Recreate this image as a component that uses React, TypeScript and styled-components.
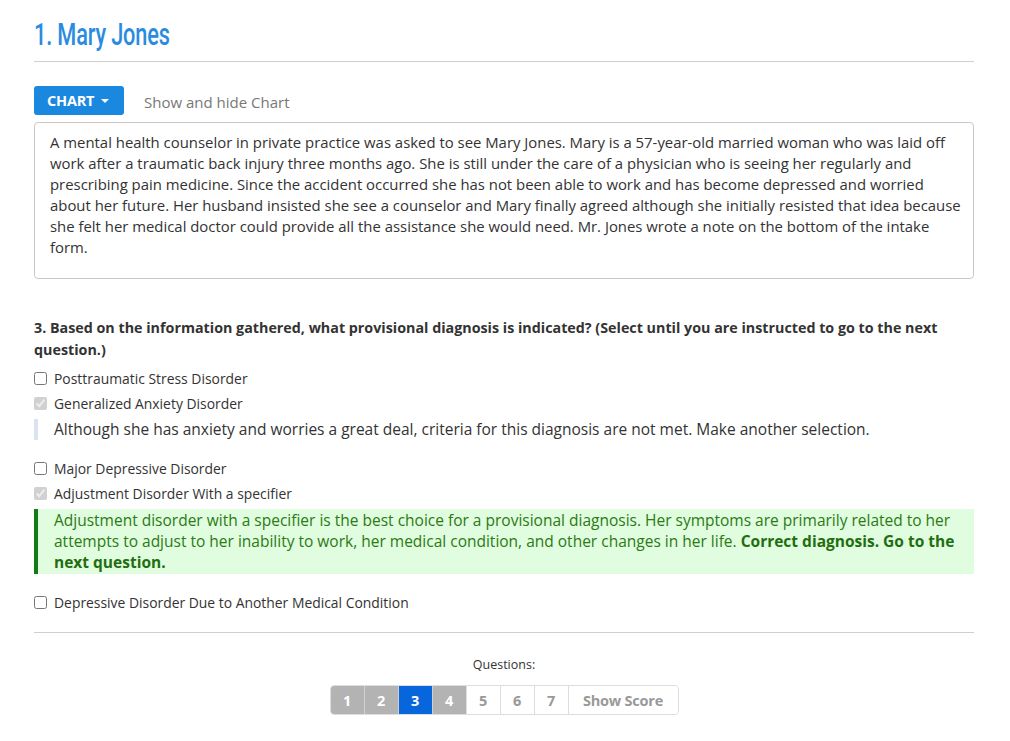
import React from "react";
import styled, { createGlobalStyle } from "styled-components";

const Global = createGlobalStyle`
  html, body { margin: 0; padding: 0; background: #fff; }
  body { font-family: "Open Sans", "Noto Sans", sans-serif; color: #333; }
  * { box-sizing: border-box; }
`;

const Page = styled.div`
  width: 940px;
  margin: 0 0 0 34px;
  padding-top: 18px;
`;

const Title = styled.h1`
  margin: 0;
  height: 34px;
  font-family: "Roboto", "Liberation Sans", sans-serif;
  font-weight: 500;
  font-size: 31px;
  line-height: 34px;
  color: #2a8be0;
  letter-spacing: -0.2px;
  span {
    display: inline-block;
    transform: scaleX(0.7);
    transform-origin: left center;
  }
`;

const Rule = styled.hr<{ $mt: number }>`
  border: 0;
  border-top: 1px solid #cfcfcf;
  margin: ${(p) => p.$mt}px 0 0 0;
`;

const Toolbar = styled.div`
  display: flex;
  align-items: center;
  gap: 20px;
  margin-top: 24px;
`;

const ChartButton = styled.button`
  display: inline-flex;
  align-items: center;
  gap: 7px;
  height: 29px;
  width: 90px;
  padding: 0 0 0 13px;
  border: 0;
  border-radius: 3px;
  background: #1b88e0;
  color: #fff;
  font-family: "Open Sans", sans-serif;
  font-weight: 700;
  font-size: 14.5px;
  letter-spacing: -0.2px;
`;

const Caret = styled.span`
  width: 0;
  height: 0;
  border-left: 4px solid transparent;
  border-right: 4px solid transparent;
  border-top: 4px solid #fff;
  margin-top: 1px;
`;

const Hint = styled.span`
  color: #777;
  font-size: 15px;
  padding-top: 3px;
`;

const CaseBox = styled.div`
  margin-top: 7px;
  border: 1px solid #c8c8c8;
  border-radius: 4px;
  padding: 9px 9px 20px 15px;
  font-size: 14.9px;
  line-height: 21px;
  color: #333;
`;

const Question = styled.div`
  margin-top: 38px;
  font-weight: 700;
  font-size: 14.3px;
  line-height: 22px;
  color: #333;
`;

const Options = styled.div`
  margin-top: 5px;
  display: flex;
  flex-direction: column;
`;

const OptionRow = styled.label`
  display: flex;
  align-items: center;
  gap: 7px;
  height: 25px;
  font-size: 13.9px;
  color: #333;
`;

const Box = styled.input`
  margin: 0;
  width: 13px;
  height: 13px;
`;

const Feedback = styled.div<{ $ok?: boolean }>`
  border-left: 4px solid ${(p) => (p.$ok ? "#137b13" : "#dbe3ee")};
  background: ${(p) => (p.$ok ? "#e0fde0" : "transparent")};
  color: ${(p) => (p.$ok ? "#2b7a12" : "#333")};
  padding: ${(p) => (p.$ok ? "1px 10px 1px 16px" : "0 10px 0 16px")};
  font-size: 15.5px;
  line-height: 21px;
  margin: 3px 0 0 0;
  b { font-weight: 700; color: #1f6e0f; }
`;

const Spacer = styled.div<{ $h: number }>`
  height: ${(p) => p.$h}px;
`;

const Footer = styled.div`
  display: flex;
  flex-direction: column;
  align-items: center;
  margin-top: 23px;
`;

const FooterLabel = styled.div`
  font-size: 12.5px;
  color: #333;
`;

const Pager = styled.div`
  display: flex;
  margin-top: 12px;
  border: 1px solid #ddd;
  border-radius: 4px;
  overflow: hidden;
`;

const PageBtn = styled.div<{ $state: "done" | "active" | "todo"; $w: number }>`
  display: flex;
  align-items: center;
  justify-content: center;
  width: ${(p) => p.$w}px;
  height: 28px;
  font-weight: 700;
  font-size: 14.5px;
  letter-spacing: -0.2px;
  border-left: 1px solid ${(p) => (p.$state === "todo" ? "#ddd" : "#d0d0d0")};
  &:first-child { border-left: 0; }
  background: ${(p) =>
    p.$state === "active" ? "#0866dc" : p.$state === "done" ? "#b3b3b3" : "#fff"};
  color: ${(p) => (p.$state === "todo" ? "#999" : "#fff")};
`;

export default function App() {
  const pages: { label: string; state: "done" | "active" | "todo"; w: number }[] = [
    { label: "1", state: "done", w: 33 },
    { label: "2", state: "done", w: 34 },
    { label: "3", state: "active", w: 34 },
    { label: "4", state: "done", w: 34 },
    { label: "5", state: "todo", w: 34 },
    { label: "6", state: "todo", w: 34 },
    { label: "7", state: "todo", w: 34 },
    { label: "Show Score", state: "todo", w: 110 },
  ];
  return (
    <>
      <Global />
      <Page>
        <Title>
          <span>1. Mary Jones</span>
        </Title>
        <Rule $mt={9} />
        <Toolbar>
          <ChartButton>
            CHART <Caret />
          </ChartButton>
          <Hint>Show and hide Chart</Hint>
        </Toolbar>
        <CaseBox>
          A mental health counselor in private practice was asked to see Mary Jones. Mary is a
          57-year-old married woman who was laid off work after a traumatic back injury three months
          ago. She is still under the care of a physician who is seeing her regularly and prescribing
          pain medicine. Since the accident occurred she has not been able to work and has become
          depressed and worried about her future. Her husband insisted she see a counselor and Mary
          finally agreed although she initially resisted that idea because she felt her medical
          doctor could provide all the assistance she would need. Mr. Jones wrote a note on the
          bottom of the intake form.
        </CaseBox>
        <Question>
          3. Based on the information gathered, what provisional diagnosis is indicated? (Select
          until you are instructed to go to the next question.)
        </Question>
        <Options>
          <OptionRow>
            <Box type="checkbox" readOnly />
            Posttraumatic Stress Disorder
          </OptionRow>
          <OptionRow>
            <Box type="checkbox" checked disabled readOnly />
            Generalized Anxiety Disorder
          </OptionRow>
          <Feedback>
            Although she has anxiety and worries a great deal, criteria for this diagnosis are not
            met. Make another selection.
          </Feedback>
          <Spacer $h={16} />
          <OptionRow>
            <Box type="checkbox" readOnly />
            Major Depressive Disorder
          </OptionRow>
          <OptionRow>
            <Box type="checkbox" checked disabled readOnly />
            Adjustment Disorder With a specifier
          </OptionRow>
          <Feedback $ok>
            Adjustment disorder with a specifier is the best choice for a provisional diagnosis. Her
            symptoms are primarily related to her attempts to adjust to her inability to work, her
            medical condition, and other changes in her life.{" "}
            <b>Correct diagnosis. Go to the next question.</b>
          </Feedback>
          <Spacer $h={16} />
          <OptionRow>
            <Box type="checkbox" readOnly />
            Depressive Disorder Due to Another Medical Condition
          </OptionRow>
        </Options>
        <Rule $mt={17} />
        <Footer>
          <FooterLabel>Questions:</FooterLabel>
          <Pager>
            {pages.map((p) => (
              <PageBtn key={p.label} $state={p.state} $w={p.w}>
                {p.label}
              </PageBtn>
            ))}
          </Pager>
        </Footer>
      </Page>
    </>
  );
}
